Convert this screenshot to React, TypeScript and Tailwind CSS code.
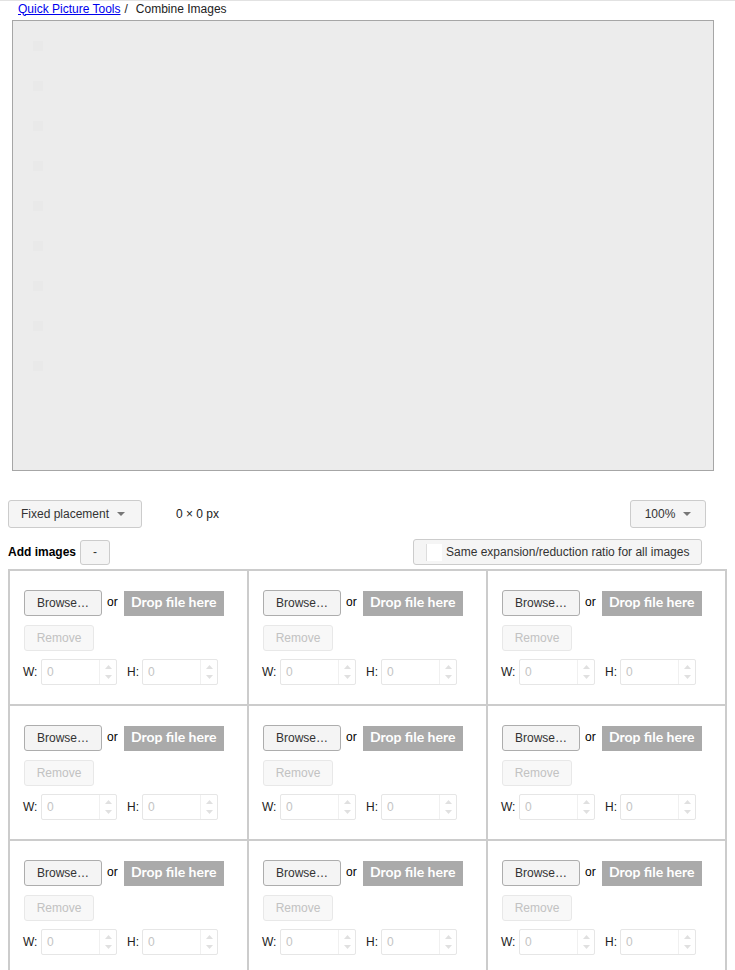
import React from 'react';

const font = { fontFamily: '"Liberation Sans", Arial, sans-serif' };

function Caret() {
  return (
    <svg width="8" height="4" viewBox="0 0 8 4" className="ml-[8px]">
      <path d="M0 0 L8 0 L4 4 Z" fill="#777" />
    </svg>
  );
}

function NumberBox() {
  return (
    <div className="flex h-[26px] w-[76px] items-stretch rounded-[2px] border border-[#e6e6e6] bg-white">
      <div className="flex flex-1 items-center pl-[5px] text-[12px] text-[#c4c4c4]">0</div>
      <div className="flex w-[17px] flex-col items-center justify-center gap-[6px] border-l border-[#f0f0f0]">
        <svg width="7" height="4" viewBox="0 0 7 4">
          <path d="M0 4 L3.5 0 L7 4 Z" fill="#e0e0e0" />
        </svg>
        <svg width="7" height="4" viewBox="0 0 7 4">
          <path d="M0 0 L7 0 L3.5 4 Z" fill="#e0e0e0" />
        </svg>
      </div>
    </div>
  );
}

function ImageCell() {
  return (
    <div className="h-[135px] border-r-2 border-b-2 border-[#cccccc] px-[14px] pt-[19px]">
      <div className="flex h-[26px] items-center">
        <button className="h-[26px] w-[78px] rounded-[3px] border border-[#adadad] bg-[#f4f4f4] text-[12px] text-[#333]">
          Browse…
        </button>
        <span className="ml-[5px] -mt-[3px] text-[12px] text-black">or</span>
        <div
          className="ml-[6px] flex h-[25px] w-[100px] items-center justify-center bg-[#aaaaaa] pb-[2px] text-[14px] font-bold leading-[16px] text-white"
          style={{ fontFamily: 'Lato, "Noto Sans", sans-serif' }}
        >
          Drop file here
        </div>
      </div>
      <button
        disabled
        className="mt-[9px] h-[26px] w-[70px] rounded-[3px] border border-[#e8e8e8] bg-[#f8f8f8] text-[12px] text-[#c2c2c2]"
      >
        Remove
      </button>
      <div className="mt-[8px] flex h-[26px] items-center text-[12px] text-[#222]">
        <span className="-ml-[1px] w-[18px]">W:</span>
        <NumberBox />
        <span className="ml-[10px] w-[15px]">H:</span>
        <NumberBox />
      </div>
    </div>
  );
}

export default function App() {
  return (
    <div className="min-h-screen border-t border-[#e2e2e2] bg-white pl-[8px]" style={font}>
      {/* breadcrumb */}
      <div className="flex h-[19px] items-center pb-[4px] pl-[10px] text-[12px] leading-[14px]">
        <a href="#" className="text-[#0000ee] underline">
          Quick Picture Tools
        </a>
        <span className="ml-[4px] text-[#222]">/</span>
        <span className="ml-[8px] text-[#222]">Combine Images</span>
      </div>

      {/* canvas preview */}
      <div className="ml-[4px] h-[451px] w-[702px] border border-[#a6a6a6] bg-[#ececec]">
        <div className="flex flex-col gap-[30px] pl-[20px] pt-[20px]">
          {Array.from({ length: 9 }).map((_, i) => (
            <div key={i} className="h-[10px] w-[10px] bg-[#e9e9e9]" />
          ))}
        </div>
      </div>

      {/* toolbar */}
      <div className="mt-[29px] flex w-[698px] items-center">
        <button className="flex h-[28px] w-[134px] items-center rounded-[3px] border border-[#cccccc] bg-[#f5f5f5] pl-[12px] text-[12px] text-[#333]">
          Fixed placement
          <Caret />
        </button>
        <span className="ml-[34px] text-[12px] text-[#222]">0 × 0 px</span>
        <button className="ml-auto flex h-[28px] w-[76px] items-center justify-center rounded-[3px] border border-[#cccccc] bg-[#f5f5f5] text-[12px] text-[#333]">
          100%
          <Caret />
        </button>
      </div>

      {/* add images row */}
      <div className="mt-[11px] flex h-[26px] w-[694px] items-center">
        <span className="text-[12px] font-bold text-black">Add images</span>
        <button className="ml-[4px] h-[25px] w-[30px] rounded-[3px] border border-[#cccccc] bg-[#f5f5f5] text-[12px] text-[#333]">
          -
        </button>
        <label className="ml-auto flex h-[26px] w-[289px] items-center rounded-[3px] border border-[#cccccc] bg-[#f5f5f5] pl-[12px] text-[12px] text-[#333]">
          <span className="h-[17px] w-[16px] border-l border-[#dddddd] bg-white" />
          <span className="ml-[4px]">Same expansion/reduction ratio for all images</span>
        </label>
      </div>

      {/* image slots */}
      <div className="mt-[4px] grid w-[719px] grid-cols-3 border-t-2 border-l-2 border-[#cccccc]">
        {Array.from({ length: 9 }).map((_, i) => (
          <ImageCell key={i} />
        ))}
      </div>
    </div>
  );
}
